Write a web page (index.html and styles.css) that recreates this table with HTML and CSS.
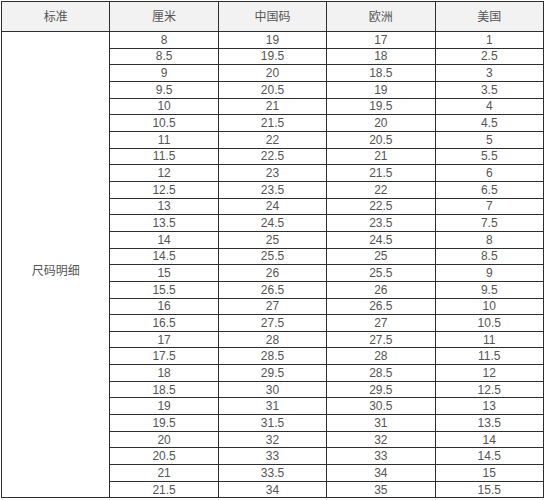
FILE: index.html
```html
<!DOCTYPE html>
<html lang="zh">
<head>
<meta charset="utf-8">
<title>尺码明细</title>
<link rel="stylesheet" href="styles.css">
</head>
<body>
<div class="wrap">
<table class="size-table">
<thead>
<tr class="head-row"><th>标准</th><th>厘米</th><th>中国码</th><th>欧洲</th><th>美国</th></tr>
</thead>
<tbody>
<tr><td class="label" rowspan="28"><span class="label-text">尺码明细</span></td><td>8</td><td>19</td><td>17</td><td>1</td></tr>
<tr><td>8.5</td><td>19.5</td><td>18</td><td>2.5</td></tr>
<tr><td>9</td><td>20</td><td>18.5</td><td>3</td></tr>
<tr><td>9.5</td><td>20.5</td><td>19</td><td>3.5</td></tr>
<tr><td>10</td><td>21</td><td>19.5</td><td>4</td></tr>
<tr><td>10.5</td><td>21.5</td><td>20</td><td>4.5</td></tr>
<tr><td>11</td><td>22</td><td>20.5</td><td>5</td></tr>
<tr><td>11.5</td><td>22.5</td><td>21</td><td>5.5</td></tr>
<tr><td>12</td><td>23</td><td>21.5</td><td>6</td></tr>
<tr><td>12.5</td><td>23.5</td><td>22</td><td>6.5</td></tr>
<tr><td>13</td><td>24</td><td>22.5</td><td>7</td></tr>
<tr><td>13.5</td><td>24.5</td><td>23.5</td><td>7.5</td></tr>
<tr><td>14</td><td>25</td><td>24.5</td><td>8</td></tr>
<tr><td>14.5</td><td>25.5</td><td>25</td><td>8.5</td></tr>
<tr><td>15</td><td>26</td><td>25.5</td><td>9</td></tr>
<tr><td>15.5</td><td>26.5</td><td>26</td><td>9.5</td></tr>
<tr><td>16</td><td>27</td><td>26.5</td><td>10</td></tr>
<tr><td>16.5</td><td>27.5</td><td>27</td><td>10.5</td></tr>
<tr><td>17</td><td>28</td><td>27.5</td><td>11</td></tr>
<tr><td>17.5</td><td>28.5</td><td>28</td><td>11.5</td></tr>
<tr><td>18</td><td>29.5</td><td>28.5</td><td>12</td></tr>
<tr><td>18.5</td><td>30</td><td>29.5</td><td>12.5</td></tr>
<tr><td>19</td><td>31</td><td>30.5</td><td>13</td></tr>
<tr><td>19.5</td><td>31.5</td><td>31</td><td>13.5</td></tr>
<tr><td>20</td><td>32</td><td>32</td><td>14</td></tr>
<tr><td>20.5</td><td>33</td><td>33</td><td>14.5</td></tr>
<tr><td>21</td><td>33.5</td><td>34</td><td>15</td></tr>
<tr><td>21.5</td><td>34</td><td>35</td><td>15.5</td></tr>
</tbody>
</table>
</div>
</body>
</html>
```

FILE: styles.css
```css
html, body {
  margin: 0;
  padding: 0;
  background: #ffffff;
}

.wrap {
  padding: 1px 0 0 1px;
}

.size-table {
  width: 543px;
  border-collapse: collapse;
  table-layout: fixed;
  font-family: "Liberation Sans", "Noto Sans CJK SC", sans-serif;
  font-size: 12px;
  color: #555555;
}

.size-table th,
.size-table td {
  border: 1px solid #2e2e2e;
  padding: 0;
  text-align: center;
  vertical-align: middle;
  line-height: 14px;
  font-weight: normal;
}

.head-row {
  height: 30px;
}

.head-row th {
  background: #f2f2f2;
}

.size-table tbody tr {
  height: 16.67px;
}

.label-text {
  display: block;
  padding-top: 11px;
  font-family: "Noto Sans CJK SC", sans-serif;
}
```
